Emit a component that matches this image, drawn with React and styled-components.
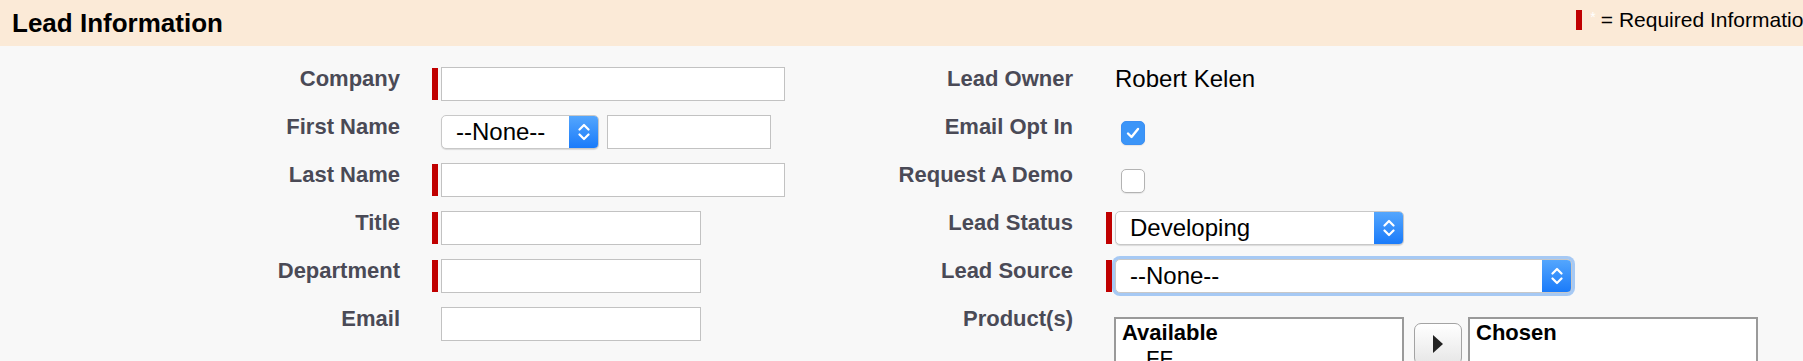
import React from "react";
import styled, { createGlobalStyle } from "styled-components";

const GlobalStyle = createGlobalStyle`
  html, body {
    margin: 0;
    padding: 0;
    overflow: hidden;
    background: #f8f8f8;
  }
  body {
    font-family: "Liberation Sans", Arial, Helvetica, sans-serif;
  }
`;

const Page = styled.div`
  width: 1832px;
  min-height: 361px;
  background: #f8f8f8;
`;

const SectionHeader = styled.div`
  display: flex;
  justify-content: space-between;
  align-items: flex-start;
  height: 46px;
  padding: 0 17px 0 12px;
  background: #fbead7;
`;

const SectionTitle = styled.h2`
  margin: 0;
  font-size: 26px;
  line-height: 46px;
  font-weight: bold;
  color: #000;
`;

const Legend = styled.div`
  display: flex;
  align-items: center;
  height: 40px;
  gap: 5px;
  font-size: 21px;
  color: #000;
  white-space: nowrap;
`;

const Star = styled.span`
  color: #fff;
  font-size: 14px;
  align-self: flex-start;
  margin: 9px 0 0 3px;
`;

const RequiredBar = styled.span`
  display: block;
  flex-shrink: 0;
  width: 6px;
  height: ${(p) => p.$h || 32}px;
  margin-top: ${(p) => (p.$h ? 0 : 1)}px;
  background: #c00000;
  visibility: ${(p) => (p.$hidden ? "hidden" : "visible")};
`;

const FormGrid = styled.div`
  display: grid;
  grid-template-columns: 400px 400px 273px 1fr;
  row-gap: 14px;
  padding-top: 21px;
`;

const Label = styled.div`
  text-align: right;
  font-size: 22px;
  line-height: 24px;
  font-weight: bold;
  color: #4a4a56;
  white-space: nowrap;
`;

const FieldCell = styled.div`
  display: flex;
  align-items: flex-start;
  gap: 3px;
  padding-left: ${(p) => p.$indent}px;
`;

const TextInput = styled.input`
  box-sizing: border-box;
  width: ${(p) => p.$w}px;
  height: 34px;
  margin: 0;
  border: 1px solid #c2c2c2;
  background: #fff;
  font-size: 22px;
  font-family: inherit;
  margin-left: ${(p) => p.$ml || 0}px;
`;

const SelectBox = styled.div`
  box-sizing: border-box;
  display: flex;
  align-items: stretch;
  width: ${(p) => p.$w}px;
  height: 34px;
  border: 1px solid #c8c8c8;
  border-radius: 5px;
  background: #fff;
  box-shadow: ${(p) =>
    p.$focused
      ? "0 0 0 3px #a6c9f4, 0 1px 1px rgba(0,0,0,0.1)"
      : "0 1px 1px rgba(0,0,0,0.12)"};
  overflow: hidden;
`;

const SelectText = styled.span`
  flex: 1;
  padding-left: 14px;
  font-size: 24px;
  line-height: 32px;
  color: #000;
  white-space: nowrap;
`;

const SelectArrow = styled.span`
  display: flex;
  align-items: center;
  justify-content: center;
  width: 29px;
  background: linear-gradient(#54a6fd, #1a7bfa);
`;

const Value = styled.div`
  font-size: 24px;
  line-height: 24px;
  color: #000;
`;

const Checkbox = styled.span`
  box-sizing: border-box;
  display: flex;
  align-items: center;
  justify-content: center;
  width: 24px;
  height: 24px;
  margin: 6px 0 0 6px;
  border-radius: 5px;
  border: 1px solid ${(p) => (p.$checked ? "#3b8ff3" : "#b3b3b3")};
  background: ${(p) => (p.$checked ? "#3b95f8" : "#fff")};
  box-shadow: 0 1px 1px rgba(0, 0, 0, 0.08);
`;

const Picker = styled.div`
  display: flex;
  align-items: flex-start;
  margin: 10px 0 0 -1px;
`;

const ListBox = styled.div`
  box-sizing: border-box;
  width: 290px;
  height: 200px;
  border: 2px solid #9a9a9a;
  background: #fff;
  padding: 1px 6px;
`;

const ListHeading = styled.div`
  font-size: 22px;
  line-height: 26px;
  font-weight: bold;
  color: #000;
`;

const ListOption = styled.div`
  padding-left: 24px;
  font-size: 22px;
  line-height: 26px;
  color: #000;
`;

const MoveButton = styled.button`
  box-sizing: border-box;
  display: flex;
  align-items: center;
  justify-content: center;
  width: 48px;
  height: 42px;
  margin: 6px 6px 0 10px;
  padding: 0;
  border: 1px solid #a3a3a3;
  border-radius: 7px;
  background: linear-gradient(#ffffff, #e6e6e6);
`;

const Chevrons = () => (
  <svg width="12" height="20" viewBox="0 0 12 20">
    <path
      d="M1.5 7.5 L6 3 L10.5 7.5 M1.5 12.5 L6 17 L10.5 12.5"
      fill="none"
      stroke="#fff"
      strokeWidth="2.2"
      strokeLinecap="round"
      strokeLinejoin="round"
    />
  </svg>
);

const Check = () => (
  <svg width="16" height="16" viewBox="0 0 16 16">
    <path
      d="M3 8.5 L6.5 12 L13 4"
      fill="none"
      stroke="#fff"
      strokeWidth="2.4"
      strokeLinecap="round"
      strokeLinejoin="round"
    />
  </svg>
);

const Select = ({ w, value, focused }) => (
  <SelectBox $w={w} $focused={focused}>
    <SelectText>{value}</SelectText>
    <SelectArrow>
      <Chevrons />
    </SelectArrow>
  </SelectBox>
);

const Field = ({ required, indent, children }) => (
  <FieldCell $indent={indent}>
    <RequiredBar $hidden={!required} />
    {children}
  </FieldCell>
);

const App = () => {
  return (
    <Page>
      <GlobalStyle />
      <SectionHeader>
        <SectionTitle>Lead Information</SectionTitle>
        <Legend>
          <RequiredBar $h={20} />
          <Star>*</Star>
          <span>= Required Information</span>
        </Legend>
      </SectionHeader>

      <FormGrid>
        <Label>Company</Label>
        <Field required indent={32}>
          <TextInput $w={344} />
        </Field>
        <Label>Lead Owner</Label>
        <FieldCell $indent={42}>
          <Value>Robert Kelen</Value>
        </FieldCell>

        <Label>First Name</Label>
        <Field indent={32}>
          <Select w={158} value="--None--" />
          <TextInput $w={164} $ml={5} />
        </Field>
        <Label>Email Opt In</Label>
        <Field indent={33}>
          <Checkbox $checked>
            <Check />
          </Checkbox>
        </Field>

        <Label>Last Name</Label>
        <Field required indent={32}>
          <TextInput $w={344} />
        </Field>
        <Label>Request A Demo</Label>
        <Field indent={33}>
          <Checkbox />
        </Field>

        <Label>Title</Label>
        <Field required indent={32}>
          <TextInput $w={260} />
        </Field>
        <Label>Lead Status</Label>
        <Field required indent={33}>
          <Select w={289} value="Developing" />
        </Field>

        <Label>Department</Label>
        <Field required indent={32}>
          <TextInput $w={260} />
        </Field>
        <Label>Lead Source</Label>
        <Field required indent={33}>
          <Select w={457} value="--None--" focused />
        </Field>

        <Label>Email</Label>
        <Field indent={32}>
          <TextInput $w={260} />
        </Field>
        <Label>Product(s)</Label>
        <Field indent={33}>
          <Picker>
            <ListBox>
              <ListHeading>Available</ListHeading>
              <ListOption>FF</ListOption>
            </ListBox>
            <MoveButton type="button">
              <svg width="12" height="18" viewBox="0 0 12 18">
                <path d="M1 0 L11 9 L1 18 Z" fill="#222" />
              </svg>
            </MoveButton>
            <ListBox>
              <ListHeading>Chosen</ListHeading>
            </ListBox>
          </Picker>
        </Field>
      </FormGrid>
    </Page>
  );
};

export default App;
